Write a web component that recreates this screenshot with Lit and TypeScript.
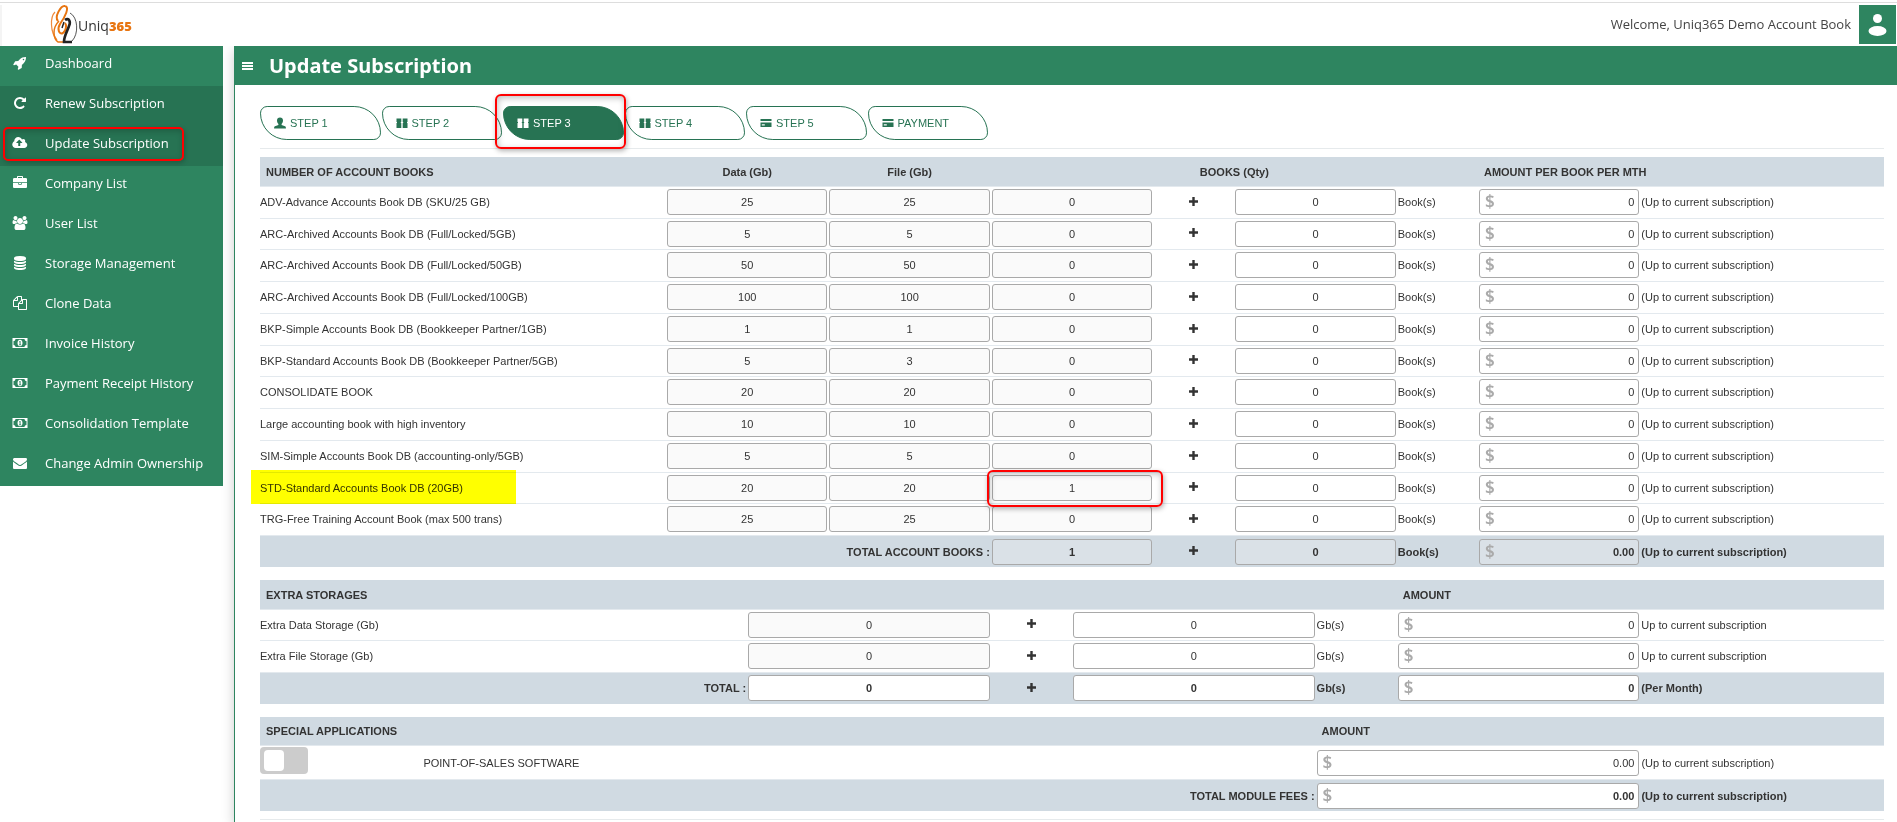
import { LitElement, html, css, svg, nothing } from "lit";
import { customElement } from "lit/decorators.js";
import { classMap } from "lit/directives/class-map.js";

const MONEY =
  "M0 256h1920v1280H0zM128 640v512q106 0 181 75t75 181h1152q0-106 75-181t181-75V640q-106 0-181-75t-75-181H384q0 106-75 181t-181 75zM960 480q160 0 240 125t80 291-80 291-240 125-240-125-80-291 80-291 240-125zM850 690v100h60v300h-80v100h280v-100h-80V640h-90z";

const ICONS: Record<string, { box: string; d: string }> = {
  rocket: {
    box: "0 0 1792 1792",
    d: "M1440 448q0-40-28-68t-68-28-68 28-28 68 28 68 68 28 68-28 28-68zm224-288q0 249-75.5 430.5t-253.5 360.5q-81 80-195 176l-20 379q-2 16-16 26l-384 224q-7 4-16 4-12 0-23-9l-64-64q-13-14-8-32l85-276-281-281-276 85q-3 1-9 1-14 0-23-9l-64-64q-17-19-5-39l224-384q10-14 26-16l379-20q96-114 176-195 188-187 358-258t431-71q14 0 24 9.5t10 22.5z",
  },
  repeat: {
    box: "0 0 1792 1792",
    d: "M1664 256v448q0 26-19 45t-45 19h-448q-42 0-59-40-17-39 14-69l138-138q-148-137-349-137-104 0-198.5 40.5t-163.5 109.5-109.5 163.5-40.5 198.5 40.5 198.5 109.5 163.5 163.5 109.5 198.5 40.5q119 0 225-52t179-147q7-10 23-12 15 0 25 9l137 138q9 8 9.5 20.5t-7.5 22.5q-109 132-264 204.5t-327 72.5q-156 0-298-61t-245-164-164-245-61-298 61-298 164-245 245-164 298-61q147 0 284.5 55.5t244.5 156.5l130-129q29-31 70-14 39 17 39 59z",
  },
  cloud: {
    box: "0 0 1856 1792",
    d: "M1216 864q0-14-9-23l-352-352q-9-9-23-9t-23 9l-351 351q-10 12-10 24 0 14 9 23t23 9h224v352q0 13 9.5 22.5t22.5 9.5h192q13 0 22.5-9.5t9.5-22.5v-352h224q13 0 22.5-9.5t9.5-22.5zm640 288q0 159-112.5 271.5t-271.5 112.5h-1088q-185 0-316.5-131.5t-131.5-316.5q0-130 70-240t188-165q-2-30-2-43 0-212 150-362t362-150q156 0 285.5 87t188.5 231q71-62 166-62 106 0 181 75t75 181q0 76-41 138 130 31 213.5 135.5t83.5 238.5z",
  },
  briefcase: {
    box: "0 0 1792 1792",
    d: "M640 256h512v-128h-512v128zm1152 640v480q0 66-47 113t-113 47h-1472q-66 0-113-47t-47-113v-480h672v160q0 26 19 45t45 19h320q26 0 45-19t19-45v-160h672zm-768 0v128h-256v-128h256zm768-480v384h-1792v-384q0-66 47-113t113-47h352v-160q0-40 28-68t68-28h576q40 0 68 28t28 68v160h352q66 0 113 47t47 113z",
  },
  users: {
    box: "0 0 1920 1792",
    d: "M593 896q-162 5-265 128h-134q-82 0-138-40.5t-56-118.5q0-353 124-353 6 0 43.5 21t97.5 42.5 119 21.5q67 0 133-23-5 37-5 66 0 139 81 256zm1071 637q0 120-73 189.5t-194 69.5h-874q-121 0-194-69.5t-73-189.5q0-53 3.5-103.5t14-109 26.5-108.5 43-97.5 62-81 85.5-53.5 111.5-20q10 0 43 21.5t73 48 107 48 135 21.5 135-21.5 107-48 73-48 43-21.5q61 0 111.5 20t85.5 53.5 62 81 43 97.5 26.5 108.5 14 109 3.5 103.5zm-1024-1277q0 106-75 181t-181 75-181-75-75-181 75-181 181-75 181 75 75 181zm704 384q0 159-112.5 271.5t-271.5 112.5-271.5-112.5-112.5-271.5 112.5-271.5 271.5-112.5 271.5 112.5 112.5 271.5zm576 225q0 78-56 118.5t-138 40.5h-134q-103-123-265-128 81-117 81-256 0-29-5-66 66 23 133 23 59 0 119-21.5t97.5-42.5 43.5-21q124 0 124 353zm-128-609q0 106-75 181t-181 75-181-75-75-181 75-181 181-75 181 75 75 181z",
  },
  database: {
    box: "0 0 1792 1792",
    d: "M896 768q237 0 443-43t325-127v170q0 69-103 128t-280 93.5-385 34.5-385-34.5-280-93.5-103-128v-170q119 84 325 127t443 43zm0 768q237 0 443-43t325-127v170q0 69-103 128t-280 93.5-385 34.5-385-34.5-280-93.5-103-128v-170q119 84 325 127t443 43zm0-384q237 0 443-43t325-127v170q0 69-103 128t-280 93.5-385 34.5-385-34.5-280-93.5-103-128v-170q119 84 325 127t443 43zm0-1152q208 0 385 34.5t280 93.5 103 128v128q0 69-103 128t-280 93.5-385 34.5-385-34.5-280-93.5-103-128v-128q0-69 103-128t280-93.5 385-34.5z",
  },
  copy: {
    box: "0 0 1792 1792",
    d: "M1696 384q40 0 68 28t28 68v1216q0 40-28 68t-68 28h-960q-40 0-68-28t-28-68v-288h-544q-40 0-68-28t-28-68v-672q0-40 20-88t48-76l408-408q28-28 76-48t88-20h416q40 0 68 28t28 68v328q68-40 128-40h416zm-544 213l-299 299h299v-299zm-640-384l-299 299h299v-299zm196 647l316-316v-416h-384v416q0 40-28 68t-68 28h-416v640h512v-256q0-40 20-88t48-76zm956 804v-1152h-384v416q0 40-28 68t-68 28h-416v640h896z",
  },
  money: { box: "0 0 1920 1792", d: MONEY },
  envelope: {
    box: "0 0 1792 1792",
    d: "M1792 710v794q0 66-47 113t-113 47h-1472q-66 0-113-47t-47-113v-794q44 49 101 87 362 246 497 345 57 42 92.5 65.5t94.5 48 110 24.5h2q51 0 110-24.5t94.5-48 92.5-65.5q170-123 498-345 57-39 100-87zm0-294q0 79-49 151t-122 123q-376 261-468 325-10 7-42.5 31t-54 38.5-52 32.5-57.5 27-50 9h-2q-23 0-50-9t-57.5-27-52-32.5-54-38.5-42.5-31q-91-64-262-182.5t-205-142.5q-62-42-117-115.5t-55-136.5q0-78 41.5-130t118.5-52h1472q65 0 112.5 47t47.5 113z",
  },
  person: {
    box: "0 0 12 12",
    d: "M6 0.5c1.9 0 3 1.3 3 3.1 0 1.500-.6 2.700-1.400 3.300v1l3.400 1.400c.6.300.9.8.9 1.500V11.500H.1V10.800c0-.7.3-1.200.9-1.500l3.400-1.400v-1C3.600 6.300 3 5.100 3 3.600 3 1.800 4.100.5 6 .5z",
  },
  books: {
    box: "0 0 12 12",
    d: "M.5 1.500h4.800v3.500h-.5v1h.5V11H.5V6H1V5H.5zM6.700 1.500h4.800V5h-.5v1h.5v5H6.700V6h.5V5h-.5z",
  },
  card: {
    box: "0 0 12 12",
    d: "M.5 2h11v2H.5zM.5 5.500h11V10H.5zM1.800 7.300v1.200h3V7.300z",
  },
  plus: { box: "0 0 9 9", d: "M3.300 0h2.400v3.300H9v2.400H5.700V9H3.300V5.700H0V3.300h3.300z" },
  bars: { box: "0 0 11 8", d: "M0 0h11v2H0zM0 3h11v2H0zM0 6h11v2H0z" },
};

const icon = (name: string, cls = "icon") => html`
  <svg class=${cls} viewBox=${ICONS[name].box} aria-hidden="true">
    ${svg`<path fill="currentColor" fill-rule="evenodd" d=${ICONS[name].d}></path>`}
  </svg>
`;

const MENU = [
  { icon: "rocket", label: "Dashboard" },
  { icon: "repeat", label: "Renew Subscription", open: true },
  { icon: "cloud", label: "Update Subscription", open: true, marked: true },
  { icon: "briefcase", label: "Company List" },
  { icon: "users", label: "User List" },
  { icon: "database", label: "Storage Management" },
  { icon: "copy", label: "Clone Data" },
  { icon: "money", label: "Invoice History" },
  { icon: "money", label: "Payment Receipt History" },
  { icon: "money", label: "Consolidation Template" },
  { icon: "envelope", label: "Change Admin Ownership" },
];

const STEPS = [
  { icon: "person", label: "STEP 1" },
  { icon: "books", label: "STEP 2" },
  { icon: "books", label: "STEP 3", current: true },
  { icon: "books", label: "STEP 4" },
  { icon: "card", label: "STEP 5" },
  { icon: "card", label: "PAYMENT" },
];

const BOOKS = [
  { name: "ADV-Advance Accounts Book DB (SKU/25 GB)", data: "25", file: "25", owned: "0" },
  { name: "ARC-Archived Accounts Book DB (Full/Locked/5GB)", data: "5", file: "5", owned: "0" },
  { name: "ARC-Archived Accounts Book DB (Full/Locked/50GB)", data: "50", file: "50", owned: "0" },
  { name: "ARC-Archived Accounts Book DB (Full/Locked/100GB)", data: "100", file: "100", owned: "0" },
  { name: "BKP-Simple Accounts Book DB (Bookkeeper Partner/1GB)", data: "1", file: "1", owned: "0" },
  { name: "BKP-Standard Accounts Book DB (Bookkeeper Partner/5GB)", data: "5", file: "3", owned: "0" },
  { name: "CONSOLIDATE BOOK", data: "20", file: "20", owned: "0" },
  { name: "Large accounting book with high inventory", data: "10", file: "10", owned: "0" },
  { name: "SIM-Simple Accounts Book DB (accounting-only/5GB)", data: "5", file: "5", owned: "0" },
  { name: "STD-Standard Accounts Book DB (20GB)", data: "20", file: "20", owned: "1", marked: true },
  { name: "TRG-Free Training Account Book (max 500 trans)", data: "25", file: "25", owned: "0" },
];

const STORAGES = ["Extra Data Storage (Gb)", "Extra File Storage (Gb)"];

const quantity = (label: string, value: string, locked = false) => html`
  <input
    class=${classMap({ quantity: true, locked })}
    type="text"
    aria-label=${label}
    .value=${value}
    ?readonly=${locked}
  />
`;

const amount = (label: string, value: string) => html`
  <label class="amount">
    <span class="currency">$</span>
    <input class="amount-input" type="text" aria-label=${label} .value=${value} />
  </label>
`;

@customElement("app-sidebar")
class AppSidebar extends LitElement {
  static styles = css`
    :host {
      display: block;
      flex: 0 0 223px;
      align-self: flex-start;
      background: #2e8560;
      font: 13px/20px "Open Sans", "Noto Sans", sans-serif;
    }
    ul {
      list-style: none;
      margin: 0;
      padding: 0;
    }
    li {
      position: relative;
    }
    a {
      display: flex;
      align-items: center;
      gap: 17px;
      height: 40px;
      padding: 0 12px 6px;
      box-sizing: border-box;
      color: #fff;
      text-decoration: none;
      white-space: nowrap;
    }
    .open {
      background: #277353;
    }
    .icon {
      width: 16px;
      height: 14px;
    }
    .marker {
      position: absolute;
      inset: 1px 39px 5px 3px;
      border: 2px solid #f00;
      border-radius: 5px;
      box-shadow: 1px 2px 5px rgba(0, 0, 0, 0.2), inset 1px 2px 6px rgba(0, 0, 0, 0.2);
      pointer-events: none;
    }
  `;

  render() {
    return html`
      <nav aria-label="Main">
        <ul>
          ${MENU.map(
            (item) => html`
              <li class=${classMap({ open: !!item.open })}>
                <a href="#">${icon(item.icon)}<span>${item.label}</span></a>
                ${item.marked ? html`<span class="marker"></span>` : nothing}
              </li>
            `
          )}
        </ul>
      </nav>
    `;
  }
}

@customElement("app-topbar")
class AppTopbar extends LitElement {
  static styles = css`
    :host {
      display: flex;
      align-items: center;
      justify-content: space-between;
      height: 46px;
      box-sizing: border-box;
      padding: 2px 1px 0 0;
      background: linear-gradient(#ddd, #ddd) 0 2px / 100% 1px no-repeat,
        linear-gradient(#f4f4f4, #f4f4f4) 0 5px / 2px 100% no-repeat, #fff;
    }
    .brand {
      display: flex;
      align-items: center;
      padding: 4px 0 0 50px;
      color: #333;
      text-decoration: none;
      font: 14px/20px "Open Sans", sans-serif;
    }
    .mark {
      width: 28px;
      height: 40px;
      margin-top: -4px;
    }
    .digits {
      color: #e87511;
      font: 800 13px/20px "Open Sans", sans-serif;
    }
    .account {
      display: flex;
      align-items: center;
      gap: 8px;
      color: #444;
      font: 13px/20px "Open Sans", "Noto Sans", sans-serif;
    }
    button {
      width: 37px;
      height: 39px;
      padding: 0;
      border: 0;
      background: #2e8560;
      color: #fff;
    }
    .avatar {
      display: block;
      width: 37px;
      height: 39px;
    }
  `;

  render() {
    return html`
      <a class="brand" href="#">
        <svg class="mark" viewBox="0 0 28 40" fill="none" aria-hidden="true">
          <path d="M5 8C0 13 0 28 7 36" stroke="#ef8a3c" stroke-width="1.200" />
          <path d="M9 17C2 24 3 34 8 38H15" stroke="#e87511" stroke-width="1.500" />
          <path d="M8 17C4 13 11 1 15 2C20 3 15 13 10 20C7 25 9 31 13 29C16 27 17 21 15 19" stroke="#e87511" stroke-width="2" />
          <path d="M15 16C19 13 21 18 19 22C17 28 14 32 14 38H22" stroke="#222" stroke-width="2.600" />
          <path d="M14 18L12 24" stroke="#222" stroke-width="1.500" />
          <path d="M20 9C28 13 29 30 22 37" stroke="#555" stroke-width="1" />
        </svg>
        <span>Uniq<span class="digits">365</span></span>
      </a>
      <div class="account">
        <span>Welcome, Uniq365 Demo Account Book</span>
        <button type="button" aria-label="Account">
          <svg class="avatar" viewBox="0 0 37 39" fill="currentColor" aria-hidden="true">
            <circle cx="18.500" cy="13.500" r="4.500" />
            <ellipse cx="18.500" cy="26" rx="9" ry="5" />
          </svg>
        </button>
      </div>
    `;
  }
}

@customElement("app-subscription")
class AppSubscription extends LitElement {
  static styles = css`
    :host {
      display: block;
      flex: 1;
      min-width: 0;
      border-left: 1px solid #2e8560;
      box-shadow: 0 4px 12px rgba(0, 0, 0, 0.2);
      background: #fff;
      color: #333;
      font: 11px/14px "Liberation Sans", Arial, sans-serif;
    }
    .title-bar {
      display: flex;
      align-items: center;
      gap: 16px;
      height: 39px;
      padding-left: 7px;
      background: #2e8560;
      color: #fff;
    }
    .menu {
      display: block;
      padding: 0;
      border: 0;
      background: none;
      color: inherit;
    }
    .bars {
      display: block;
      width: 11px;
      height: 8px;
    }
    h1 {
      margin: 0;
      font: 700 20px/28px "Noto Sans", "Open Sans", sans-serif;
    }
    .content {
      padding: 21px 13px 2px 25px;
    }
    .steps {
      display: grid;
      grid-template-columns: repeat(6, 1fr);
      gap: 1px;
      max-width: 728px;
      margin: 0;
      padding: 0;
      list-style: none;
    }
    .steps li {
      position: relative;
    }
    .step {
      display: flex;
      align-items: center;
      gap: 4px;
      width: 100%;
      height: 34px;
      padding: 0 0 0 13px;
      border: 1px solid #277353;
      border-radius: 8px 30px;
      background: #fff;
      color: #277353;
      font: inherit;
    }
    .step-icon {
      width: 12px;
      height: 12px;
    }
    .step.current {
      background: #277353;
      color: #fff;
    }
    .marker {
      position: absolute;
      z-index: 1;
      border: 2px solid #f00;
      border-radius: 6px;
      box-shadow: 1px 2px 5px rgba(0, 0, 0, 0.3), inset 1px 2px 6px rgba(0, 0, 0, 0.25);
      pointer-events: none;
    }
    .step-marker {
      inset: -12px -2px -9px -8px;
    }
    .cell-marker {
      inset: -5px -11px -6px -5px;
    }
    hr {
      height: 1px;
      margin: 8px 0;
      border: 0;
      background: #e6eaec;
    }
    table {
      width: 100%;
      table-layout: fixed;
      border-collapse: separate;
      border-spacing: 0;
      margin-bottom: 13px;
    }
    .last {
      margin-bottom: 8px;
    }
    .w5 {
      width: 5%;
    }
    .w10 {
      width: 10%;
    }
    .w15 {
      width: 15%;
    }
    .w20 {
      width: 20%;
    }
    .w25 {
      width: 25%;
    }
    .w30 {
      width: 30%;
    }
    .w55 {
      width: 55%;
    }
    th,
    td {
      box-sizing: border-box;
      padding: 0 1px;
      text-align: left;
      vertical-align: middle;
      white-space: nowrap;
    }
    thead tr {
      height: 30px;
    }
    .applications thead tr {
      height: 29px;
    }
    thead th {
      padding: 0 6px;
      border-bottom: 1px solid #e3e9ee;
      background: #d0dae2;
    }
    thead .center {
      text-align: center;
    }
    tbody tr {
      height: 32px;
    }
    tbody tr:nth-child(4n + 2),
    .storages tbody tr:first-child {
      height: 31px;
    }
    .storages tbody tr:nth-child(2) {
      height: 32px;
    }
    .applications tbody tr {
      height: 34px;
    }
    tbody th,
    tbody td {
      padding-bottom: 1px;
      border-bottom: 1px solid #e3e9ee;
      font-weight: 400;
    }
    tbody th:first-child,
    tbody td:first-child {
      padding-left: 0;
    }
    .applications tbody td {
      padding-bottom: 0;
    }
    tfoot tr {
      height: 31px;
    }
    tfoot th,
    tfoot td {
      background: #d0dae2;
      font-weight: 700;
    }
    tfoot th {
      text-align: right;
    }
    .storages tfoot th,
    .storages tfoot td {
      padding-bottom: 1px;
    }
    .plus-cell {
      text-align: center;
    }
    .plus {
      display: block;
      width: 9px;
      height: 9px;
      margin: 0 auto 2px;
    }
    .slot {
      position: relative;
    }
    .quantity {
      display: block;
      width: 100%;
      height: 26px;
      box-sizing: border-box;
      padding: 0 4px;
      border: 1px solid #a9a9a9;
      border-radius: 3px;
      background: #fff;
      color: #333;
      font: inherit;
      text-align: center;
    }
    .locked {
      background: #fafafa;
    }
    .amount {
      display: flex;
      align-items: center;
      height: 26px;
      box-sizing: border-box;
      padding: 0 4px 0 5px;
      border: 1px solid #a9a9a9;
      border-radius: 3px;
      background: #fff;
    }
    .currency {
      color: #aaa;
      font: 600 17px/20px "Noto Sans", "Open Sans", sans-serif;
    }
    .amount-input {
      flex: 1;
      min-width: 0;
      padding: 0;
      border: 0;
      background: none;
      color: #333;
      font: inherit;
      text-align: right;
    }
    .shaded .quantity,
    .shaded .amount {
      background: #dae1e7;
    }
    .name {
      position: relative;
    }
    .highlight {
      position: absolute;
      inset: -3px auto -1px -9px;
      width: 265px;
      background: #ff0;
      mix-blend-mode: multiply;
      pointer-events: none;
    }
    .toggle {
      display: block;
      width: 48px;
      height: 27px;
      margin: 0 0 4px;
      padding: 3px 4px;
      box-sizing: border-box;
      appearance: none;
      border-radius: 4px;
      background: #ccc;
    }
    .toggle::before {
      content: "";
      display: block;
      width: 20px;
      height: 21px;
      border-radius: 4px;
      background: #fff;
    }
  `;

  private plusCell() {
    return html`<td class="plus-cell">${icon("plus", "plus")}</td>`;
  }

  private booksTable() {
    return html`
      <table>
        <colgroup>
          <col class="w25" /><col class="w10" /><col class="w10" /><col class="w10" />
          <col class="w5" /><col class="w10" /><col class="w5" /><col class="w10" /><col class="w15" />
        </colgroup>
        <thead>
          <tr>
            <th>NUMBER OF ACCOUNT BOOKS</th>
            <th class="center">Data (Gb)</th>
            <th class="center">File (Gb)</th>
            <th class="center" colspan="4">BOOKS (Qty)</th>
            <th colspan="2">AMOUNT PER BOOK PER MTH</th>
          </tr>
        </thead>
        <tbody>
          ${BOOKS.map(
            (book) => html`
              <tr>
                <th class="name" scope="row">
                  ${book.name}${book.marked ? html`<span class="highlight"></span>` : nothing}
                </th>
                <td>${quantity(`${book.name} data`, book.data, true)}</td>
                <td>${quantity(`${book.name} file`, book.file, true)}</td>
                <td>
                  <div class="slot">
                    ${quantity(`${book.name} current books`, book.owned, true)}
                    ${book.marked ? html`<span class="marker cell-marker"></span>` : nothing}
                  </div>
                </td>
                ${this.plusCell()}
                <td>${quantity(`${book.name} added books`, "0")}</td>
                <td>Book(s)</td>
                <td>${amount(`${book.name} amount`, "0")}</td>
                <td>(Up to current subscription)</td>
              </tr>
            `
          )}
        </tbody>
        <tfoot>
          <tr class="shaded">
            <th colspan="3" scope="row">TOTAL ACCOUNT BOOKS :</th>
            <td>${quantity("Total current books", "1", true)}</td>
            ${this.plusCell()}
            <td>${quantity("Total added books", "0", true)}</td>
            <td>Book(s)</td>
            <td>${amount("Total books amount", "0.00")}</td>
            <td>(Up to current subscription)</td>
          </tr>
        </tfoot>
      </table>
    `;
  }

  private storagesTable() {
    return html`
      <table class="storages">
        <colgroup>
          <col class="w30" /><col class="w15" /><col class="w5" /><col class="w15" />
          <col class="w5" /><col class="w15" /><col class="w15" />
        </colgroup>
        <thead>
          <tr>
            <th colspan="5">EXTRA STORAGES</th>
            <th colspan="2">AMOUNT</th>
          </tr>
        </thead>
        <tbody>
          ${STORAGES.map(
            (name) => html`
              <tr>
                <th scope="row">${name}</th>
                <td>${quantity(`${name} current`, "0", true)}</td>
                ${this.plusCell()}
                <td>${quantity(`${name} added`, "0")}</td>
                <td>Gb(s)</td>
                <td>${amount(`${name} amount`, "0")}</td>
                <td>Up to current subscription</td>
              </tr>
            `
          )}
        </tbody>
        <tfoot>
          <tr>
            <th scope="row">TOTAL :</th>
            <td>${quantity("Total current storage", "0")}</td>
            ${this.plusCell()}
            <td>${quantity("Total added storage", "0")}</td>
            <td>Gb(s)</td>
            <td>${amount("Total storage amount", "0")}</td>
            <td>(Per Month)</td>
          </tr>
        </tfoot>
      </table>
    `;
  }

  private applicationsTable() {
    return html`
      <table class="applications last">
        <colgroup>
          <col class="w10" /><col class="w55" /><col class="w20" /><col class="w15" />
        </colgroup>
        <thead>
          <tr>
            <th colspan="2">SPECIAL APPLICATIONS</th>
            <th colspan="2">AMOUNT</th>
          </tr>
        </thead>
        <tbody>
          <tr>
            <td><input class="toggle" id="pos" type="checkbox" /></td>
            <td><label for="pos">POINT-OF-SALES SOFTWARE</label></td>
            <td>${amount("Point-of-sales amount", "0.00")}</td>
            <td>(Up to current subscription)</td>
          </tr>
        </tbody>
        <tfoot>
          <tr>
            <th colspan="2" scope="row">TOTAL MODULE FEES :</th>
            <td>${amount("Total module fees", "0.00")}</td>
            <td>(Up to current subscription)</td>
          </tr>
        </tfoot>
      </table>
    `;
  }

  render() {
    return html`
      <header class="title-bar">
        <button class="menu" type="button" aria-label="Toggle menu">${icon("bars", "bars")}</button>
        <h1>Update Subscription</h1>
      </header>
      <div class="content">
        <ol class="steps">
          ${STEPS.map(
            (step) => html`
              <li>
                <button type="button" class=${classMap({ step: true, current: !!step.current })}>
                  ${icon(step.icon, "step-icon")}<span>${step.label}</span>
                </button>
                ${step.current ? html`<span class="marker step-marker"></span>` : nothing}
              </li>
            `
          )}
        </ol>
        <hr />
        ${this.booksTable()} ${this.storagesTable()} ${this.applicationsTable()}
        <hr />
      </div>
    `;
  }
}

@customElement("app-root")
class AppRoot extends LitElement {
  static styles = css`
    :host {
      display: flex;
      flex-direction: column;
      height: 100vh;
      overflow: hidden;
      background: #fff;
    }
    .body {
      display: flex;
      flex: 1;
      gap: 11px;
      min-height: 0;
      overflow: hidden;
    }
  `;

  render() {
    return html`
      <app-topbar></app-topbar>
      <div class="body">
        <app-sidebar></app-sidebar>
        <app-subscription></app-subscription>
      </div>
    `;
  }
}
